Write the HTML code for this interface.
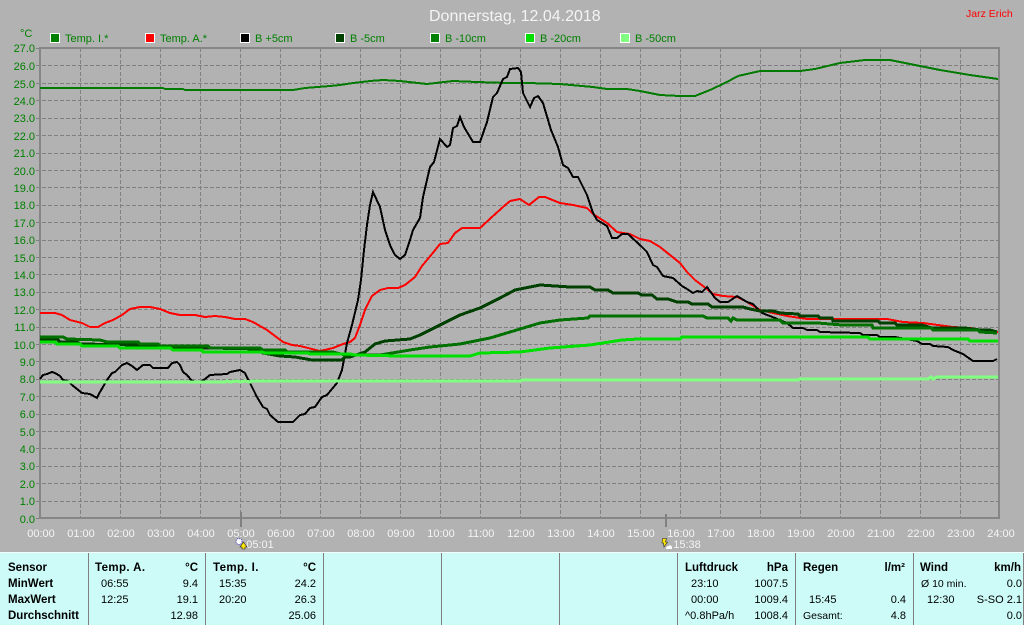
<!DOCTYPE html>
<html><head><meta charset="utf-8"><style>
html,body{margin:0;padding:0;background:#b2b2b2;width:1024px;height:625px;overflow:hidden}
svg{display:block;font-family:"Liberation Sans",sans-serif;font-size:11px}
.yl text{fill:#008000;text-anchor:end;font-size:11px}
.xl text{fill:#f4f4f4;text-anchor:middle;font-size:11px}
.lg text{fill:#008000;font-size:11px}
.p text{fill:#000;font-size:11px}
.p .b{font-weight:bold;font-size:11.5px}
.p .t{letter-spacing:.4px}
.p .r{text-anchor:end}
polyline{fill:none;shape-rendering:crispEdges}
</style></head><body>
<svg width="1024" height="625" viewBox="0 0 1024 625">
<rect width="1024" height="625" fill="#b2b2b2"/>
<text x="429" y="21" fill="#f4f4f4" style="font-size:16px">Donnerstag, 12.04.2018</text>
<text x="966" y="17" fill="#ff0000" style="font-size:10.5px">Jarz Erich</text>
<text x="20" y="37" fill="#008000" style="font-size:11px">°C</text>
<g class="lg" stroke="none" shape-rendering="crispEdges">
<rect x="50.5" y="33.5" width="9" height="9" fill="#008000" stroke="#fff"/><text x="65" y="42">Temp. I.*</text>
<rect x="145.5" y="33.5" width="9" height="9" fill="#ff0000" stroke="#fff"/><text x="160" y="42">Temp. A.*</text>
<rect x="240.5" y="33.5" width="9" height="9" fill="#000" stroke="#fff"/><text x="255" y="42">B +5cm</text>
<rect x="335.5" y="33.5" width="9" height="9" fill="#004000" stroke="#fff"/><text x="350" y="42">B -5cm</text>
<rect x="430.5" y="33.5" width="9" height="9" fill="#008000" stroke="#fff"/><text x="445" y="42">B -10cm</text>
<rect x="525.5" y="33.5" width="9" height="9" fill="#00e000" stroke="#fff"/><text x="540" y="42">B -20cm</text>
<rect x="620.5" y="33.5" width="9" height="9" fill="#80ff80" stroke="#fff"/><text x="635" y="42">B -50cm</text>
</g>
<path d="M36 65.5H998M36 83.5H998M36 100.5H998M36 118.5H998M36 135.5H998M36 153.5H998M36 170.5H998M36 187.5H998M36 205.5H998M36 222.5H998M36 240.5H998M36 257.5H998M36 274.5H998M36 292.5H998M36 309.5H998M36 327.5H998M36 344.5H998M36 361.5H998M36 379.5H998M36 396.5H998M36 414.5H998M36 431.5H998M36 448.5H998M36 466.5H998M36 483.5H998M36 501.5H998" stroke="#808080" stroke-dasharray="4 2" fill="none" shape-rendering="crispEdges"/>
<path d="M80.5 48V518M120.5 48V518M160.5 48V518M200.5 48V518M240.5 48V518M280.5 48V518M320.5 48V518M360.5 48V518M400.5 48V518M440.5 48V518M480.5 48V518M520.5 48V518M560.5 48V518M600.5 48V518M640.5 48V518M680.5 48V518M720.5 48V518M760.5 48V518M800.5 48V518M840.5 48V518M880.5 48V518M920.5 48V518M960.5 48V518" stroke="#808080" stroke-dasharray="4 2" fill="none" shape-rendering="crispEdges"/>
<path d="M36 48.5H40M36 518.5H40" stroke="#808080" shape-rendering="crispEdges"/>
<path d="M39 48H1000M40 47V519M999 47V519M39 518H1000" stroke="#868686" stroke-width="2" fill="none" shape-rendering="crispEdges"/>
<path d="M241 512V527M666 514V527" stroke="#808080" stroke-width="2" fill="none" shape-rendering="crispEdges"/>
<g class="yl">
<text x="35" y="52">27.0</text><text x="35" y="70">26.0</text><text x="35" y="88">25.0</text><text x="35" y="105">24.0</text><text x="35" y="122">23.0</text><text x="35" y="140">22.0</text><text x="35" y="157">21.0</text><text x="35" y="175">20.0</text><text x="35" y="192">19.0</text><text x="35" y="209">18.0</text><text x="35" y="227">17.0</text><text x="35" y="244">16.0</text><text x="35" y="262">15.0</text><text x="35" y="279">14.0</text><text x="35" y="296">13.0</text><text x="35" y="314">12.0</text><text x="35" y="331">11.0</text><text x="35" y="349">10.0</text><text x="35" y="366">9.0</text><text x="35" y="383">8.0</text><text x="35" y="401">7.0</text><text x="35" y="418">6.0</text><text x="35" y="436">5.0</text><text x="35" y="453">4.0</text><text x="35" y="470">3.0</text><text x="35" y="488">2.0</text><text x="35" y="505">1.0</text><text x="35" y="523">0.0</text>
</g>
<g class="xl">
<text x="41" y="537">00:00</text><text x="81" y="537">01:00</text><text x="121" y="537">02:00</text><text x="161" y="537">03:00</text><text x="201" y="537">04:00</text><text x="241" y="537">05:00</text><text x="281" y="537">06:00</text><text x="321" y="537">07:00</text><text x="361" y="537">08:00</text><text x="401" y="537">09:00</text><text x="441" y="537">10:00</text><text x="481" y="537">11:00</text><text x="521" y="537">12:00</text><text x="561" y="537">13:00</text><text x="601" y="537">14:00</text><text x="641" y="537">15:00</text><text x="681" y="537">16:00</text><text x="721" y="537">17:00</text><text x="761" y="537">18:00</text><text x="801" y="537">19:00</text><text x="841" y="537">20:00</text><text x="881" y="537">21:00</text><text x="921" y="537">22:00</text><text x="961" y="537">23:00</text><text x="1001" y="537">24:00</text>
<text x="260" y="548">05:01</text><text x="687" y="548">15:38</text>
</g>
<!-- sunrise / sunset icons -->
<circle cx="239" cy="541.5" r="3" fill="#fff" stroke="#3a3ac0" stroke-width="1" stroke-dasharray="1 1"/>
<path d="M243.5 542L247 547H245V549H242V547H240Z" fill="#ffe600" stroke="#222" stroke-width=".6"/>
<path d="M662.5 538.5H666.5L665.5 542H667.5L664 547L663.5 543H662Z" fill="#ffe600" stroke="#222" stroke-width=".6"/>
<path d="M666 549Q666 546 668.5 546Q670.5 544 672 547L672 549Z" fill="#fff"/>
<!-- data -->
<polyline stroke="#007a00" stroke-width="2" points="40,88 163,88 165,89 183,89 185,90 293,90 305,88 330,86 340,85 353,83 370,81 383,80 400,81 427,84 453,81 477,82 507,83 527,83 560,84 593,87 607,89 627,89 640,91 660,95 680,96 695,96 710,90 725,83 738,76 760,71 800,71 815,69 840,63 865,60 890,60 910,64 940,70 970,75 998,79"/>
<polyline stroke="#ff0000" stroke-width="2" points="40,313 55,313 62,315 70,320 82,323 90,327 98,327 105,323 113,320 122,315 130,309 140,307 150,307 160,309 170,313 180,315 195,315 205,317 215,316 225,317 235,319 245,319 253,322 267,330 283,342 292,345 300,346 308,348 320,351 333,348 343,344 350,342 355,338 360,325 365,310 372,296 380,290 388,288 398,288 405,285 415,277 422,266 432,254 440,244 448,243 455,233 462,228 480,228 493,216 503,207 510,201 520,199 529,205 539,197 545,197 560,203 573,205 587,208 593,214 607,223 617,232 630,234 640,239 650,241 660,247 670,255 680,263 687,272 695,280 707,289 713,294 723,296 737,297 747,302 760,310 773,313 787,316 807,319 833,319 873,319 887,319 903,322 923,323 953,327 970,328 990,331 998,332"/>
<polyline stroke="#000" stroke-width="2" points="40,379 43,375 47,374 52,372 55,373 60,376 63,380 68,381 72,385 77,389 82,393 90,394 97,398 100,392 107,380 112,373 115,372 122,365 127,363 132,366 137,370 143,365 150,365 153,368 168,368 172,363 177,362 180,365 183,372 187,375 192,381 200,382 205,379 210,375 227,374 230,372 240,370 245,373 250,383 257,397 263,407 267,409 270,415 278,422 293,422 300,415 305,414 310,408 315,407 322,397 327,395 337,383 342,370 347,343 352,325 358,300 361,280 364,250 367,225 370,205 373,192 380,207 385,230 390,245 395,255 400,259 405,255 410,240 413,230 420,218 423,197 430,167 434,162 440,139 447,147 450,145 453,128 457,126 460,117 464,127 473,142 480,142 487,122 493,97 497,93 503,79 507,77 510,69 518,68 521,72 523,93 530,107 534,98 538,96 543,103 551,130 558,147 563,165 568,168 573,177 578,177 587,195 593,213 597,220 607,226 612,238 617,238 622,234 628,234 642,247 647,252 653,265 657,267 663,276 673,278 682,286 687,289 693,293 697,291 702,292 707,287 715,298 720,302 728,302 737,296 747,302 753,304 762,313 775,318 787,323 793,328 803,328 807,330 817,330 820,332 860,333 863,335 877,335 880,337 895,337 917,341 922,344 930,344 933,346 948,347 953,350 963,354 973,361 993,361 997,359"/>
<polyline stroke="#004000" stroke-width="3" points="40,339 57,339 60,342 77,342 80,344 140,345 160,347 210,348 260,349 263,353 280,356 295,357 312,360 342,360 345,357 350,357 365,352 375,344 385,341 410,339 420,335 440,325 460,315 480,308 500,298 515,290 540,285 570,287 590,287 595,290 608,290 613,293 638,293 642,295 652,295 657,299 668,299 677,302 688,302 692,304 708,304 712,307 743,307 750,309 760,311 773,311 780,313 798,314 800,316 818,316 820,318 832,318 833,321 878,321 880,323 895,323 897,325 922,325 932,328 965,328 980,330 990,330 997,332"/>
<polyline stroke="#007000" stroke-width="3" points="40,337 63,337 67,339 100,340 107,342 138,342 140,344 158,344 160,346 208,346 210,348 260,348 263,350 285,350 287,352 333,352 345,355 380,355 410,350 430,347 460,344 490,338 510,332 540,323 560,320 588,318 590,316 703,316 707,318 728,318 731,321 733,318 737,320 780,320 783,323 818,323 842,325 872,325 873,328 932,328 933,330 978,330 980,332 997,333"/>
<polyline stroke="#00e000" stroke-width="3" points="40,342 55,342 57,344 80,344 82,346 118,346 120,348 170,348 173,350 202,350 203,352 262,352 265,353 308,353 310,354 350,354 355,355 400,356 470,356 480,353 520,352 550,348 590,345 622,340 638,339 680,339 682,337 868,337 870,339 968,339 970,341 998,341"/>
<polyline stroke="#80ff80" stroke-width="3" points="40,382 225,382 227,381 230,382 237,381 240,382 245,381 250,382 252,381 520,381 522,380 798,380 800,379 928,379 931,377 933,379 937,377 998,377"/>
<!-- panel -->
<rect x="0" y="552" width="1024" height="73" fill="#ccfbf8"/>
<rect x="0" y="552" width="1024" height="1" fill="#f4ffff"/>
<path d="M88.5 553V625M205.5 553V625M323.5 553V625M441.5 553V625M559.5 553V625M677.5 553V625M795.5 553V625M913.5 553V625M1023.5 553V625" stroke="#808080" fill="none" shape-rendering="crispEdges"/>
<g class="p">
<text class="b" x="8" y="571">Sensor</text><text class="b" x="8" y="587">MinWert</text><text class="b" x="8" y="603">MaxWert</text><text class="b" x="8" y="619">Durchschnitt</text>
<text class="b t" x="95" y="571">Temp. A.</text><text class="b r" x="198" y="571">°C</text>
<text x="101" y="587">06:55</text><text class="r" x="198" y="587">9.4</text>
<text x="101" y="603">12:25</text><text class="r" x="198" y="603">19.1</text>
<text class="r" x="198" y="619">12.98</text>
<text class="b t" x="213" y="571">Temp. I.</text><text class="b r" x="316" y="571">°C</text>
<text x="219" y="587">15:35</text><text class="r" x="316" y="587">24.2</text>
<text x="219" y="603">20:20</text><text class="r" x="316" y="603">26.3</text>
<text class="r" x="316" y="619">25.06</text>
<text class="b" x="685" y="571">Luftdruck</text><text class="b r" x="788" y="571">hPa</text>
<text x="691" y="587">23:10</text><text class="r" x="788" y="587">1007.5</text>
<text x="691" y="603">00:00</text><text class="r" x="788" y="603">1009.4</text>
<text x="685" y="619">^0.8hPa/h</text><text class="r" x="788" y="619">1008.4</text>
<text class="b" x="803" y="571">Regen</text><text class="b r" x="905" y="571">l/m²</text>
<text x="809" y="603">15:45</text><text class="r" x="906" y="603">0.4</text>
<text x="803" y="619" style="font-size:10.5px">Gesamt:</text><text class="r" x="906" y="619">4.8</text>
<text class="b" x="920" y="571">Wind</text><text class="b r" x="1021" y="571">km/h</text>
<text x="921" y="587" style="font-size:10.5px">Ø 10 min.</text><text class="r" x="1022" y="587">0.0</text>
<text x="927" y="603">12:30</text><text class="r" x="1022" y="603">S-SO 2.1</text>
<text class="r" x="1022" y="619">0.0</text>
</g>
</svg>
</body></html>
